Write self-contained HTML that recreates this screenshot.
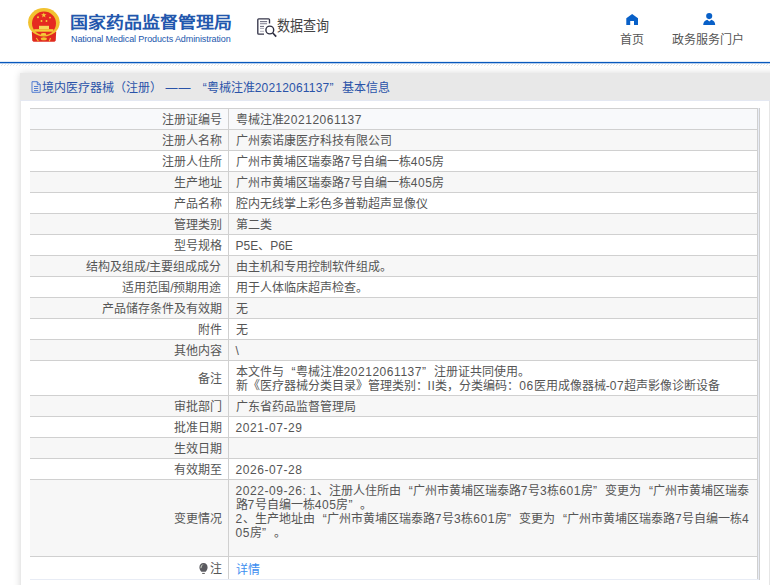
<!DOCTYPE html>
<html lang="zh-CN">
<head>
<meta charset="utf-8">
<style>
*{box-sizing:border-box;}
html,body{margin:0;padding:0;background:#fff;width:770px;height:585px;overflow:hidden;}
body{font-family:"Liberation Sans",sans-serif;color:#555;position:relative;}
.abs{position:absolute;}
#emblem{left:27px;top:7px;width:35px;height:37px;}
#cn{left:70px;top:12px;transform:scaleY(0.88);transform-origin:0 0;font-size:18px;font-weight:bold;color:#2257ad;letter-spacing:0px;white-space:nowrap;line-height:24px;}
#en{left:71px;top:34px;letter-spacing:-0.1px;font-size:9px;color:#2257ad;white-space:nowrap;line-height:10px;}
#sqt{left:277px;top:16px;transform:scaleX(0.87);transform-origin:0 0;font-size:15px;color:#444;white-space:nowrap;line-height:20px;}
.nav{top:32px;font-size:12px;color:#555;line-height:16px;white-space:nowrap;}
#bl{left:0;top:61px;width:770px;height:3px;background:linear-gradient(rgba(7,88,189,0.12) 0,rgba(7,88,189,0.12) 1px,#0758bd 1px,#0758bd 2px,rgba(7,88,189,0.3) 2px);}
#hatch{left:0;top:64px;width:770px;height:2px;}
#panel{left:20px;top:73px;width:760px;height:520px;background:#fff;box-shadow:0 0 7px rgba(0,0,0,0.15);}
#ph{left:0;top:0;width:100%;height:28px;background:#e8e8e8;border-bottom:1px solid #e4e8f2;}
#pb{left:0;top:28px;width:1px;height:600px;background:#e9e9e9;}
#pbr{left:749px;top:28px;width:11px;height:600px;background:#fff;border-left:1px solid #e6e6e6;}
#title{left:11px;top:7px;font-size:12px;color:#2a53a8;white-space:nowrap;line-height:16px;}
#tw{left:30px;top:108px;width:730px;height:472px;background:#e8ecf5;border-right:1px solid #cfcfcf;}
table{position:absolute;left:30px;top:108px;width:728px;border-collapse:collapse;font-size:12px;color:#555;}
td{border-top:1px solid #d0d0d0;padding:2px 0 0 0;line-height:14px;}
td.l{width:198px;text-align:right;padding-right:6px;border-right:1px solid #d0d0d0;}
td.r{padding-left:7px;border-right:1px solid #d0d0d0;}
.q1{display:inline-block;width:12px;text-align:right;}
.q2{display:inline-block;width:12px;text-align:left;}
.pin{display:inline-block;width:11px;vertical-align:-1px;}
.pin svg{display:block;}
.lnk{color:#3d8ef0;position:relative;top:1.5px;}
td.r{white-space:nowrap;}
.n{letter-spacing:0.55px;}
</style>
</head>
<body>
<svg id="emblem" class="abs" viewBox="26 6 36 38" style="left:26px;top:6px;width:36px;height:38px">
  <path d="M31.8 31.5 L32.3 40.8 L33.5 41.7 L54.5 41.7 L55.7 40.8 L56.2 31.5 Z" fill="#e02a1f"/>
  <ellipse cx="43.9" cy="22.2" rx="15.8" ry="14.2" fill="#f2c230"/>
  <ellipse cx="44" cy="23.3" rx="12" ry="11.9" fill="#e52a20"/>
  <polygon points="43.8,12.4 44.5,14.3 46.5,14.3 44.9,15.5 45.5,17.4 43.8,16.2 42.1,17.4 42.7,15.5 41.1,14.3 43.1,14.3" fill="#f4d03c"/>
  <circle cx="38" cy="17.3" r="0.95" fill="#f4d03c"/>
  <circle cx="50" cy="17.6" r="0.95" fill="#f4d03c"/>
  <circle cx="41.5" cy="21" r="0.95" fill="#f4d03c"/>
  <circle cx="46.5" cy="21" r="0.95" fill="#f4d03c"/>
  <rect x="39" y="25.8" width="10" height="3.4" fill="#f6d85a"/>
  <rect x="34.2" y="29.2" width="19.2" height="2.5" fill="#f4cf3a"/>
  <ellipse cx="43.6" cy="34.2" rx="2.8" ry="1.3" fill="#f4cf3a"/>
  <ellipse cx="43.8" cy="38.8" rx="3" ry="1.5" fill="#f2c230"/>
  <path d="M36.3 38 L38.4 41.3 M50.5 38 L49.3 41.3" stroke="#f2c230" stroke-width="1.1"/>
</svg>
<div id="cn" class="abs">国家药品监督管理局</div>
<div id="en" class="abs">National Medical Products Administration</div>
<svg id="sq" class="abs" viewBox="254 14 26 26" style="left:254px;top:14px;width:26px;height:26px">
  <path d="M264 34.1 L258.7 34.1 Q257.8 34.1 257.8 33.2 L257.8 19.7 Q257.8 18.8 258.7 18.8 L268.6 18.8 Q269.5 18.8 269.5 19.7 L269.5 23.5" fill="none" stroke="#36364a" stroke-width="1.35"/>
  <line x1="260" y1="21.6" x2="267.1" y2="21.6" stroke="#55556a" stroke-width="0.9"/>
  <line x1="260" y1="23.6" x2="267.1" y2="23.6" stroke="#9a9aa8" stroke-width="1.4"/>
  <line x1="260" y1="26.4" x2="264" y2="26.4" stroke="#55556a" stroke-width="0.9"/>
  <line x1="260" y1="28.4" x2="264" y2="28.4" stroke="#9a9aa8" stroke-width="0.9"/>
  <line x1="260" y1="31.3" x2="264" y2="31.3" stroke="#aaaab6" stroke-width="0.9"/>
  <circle cx="269.8" cy="30" r="3.9" fill="#fff" stroke="#2e2e40" stroke-width="1.4"/>
  <line x1="272.8" y1="33" x2="276.2" y2="36.6" stroke="#2e2e40" stroke-width="1.7"/>
</svg>
<div id="sqt" class="abs">数据查询</div>
<svg class="abs" style="left:622px;top:10px;width:20px;height:18px" viewBox="622 10 20 18"><path d="M632.15 14 L638 18.2 L638 24.9 L634 24.9 L634 20.9 L630.2 20.9 L630.2 24.9 L626.3 24.9 L626.3 18.2 Z" fill="#0860c8"/></svg>
<div class="abs nav" style="left:620px;">首页</div>
<svg class="abs" style="left:700px;top:10px;width:20px;height:18px" viewBox="700 10 20 18"><circle cx="709.2" cy="16.1" r="3.05" fill="#0860c8"/><path d="M703.2 25.1 Q703.4 20.6 707.3 19.8 L709.3 21.6 L711.3 19.8 Q715 20.6 715.2 25.1 Z" fill="#0860c8"/></svg>
<div class="abs nav" style="left:672px;">政务服务门户</div>
<div id="bl" class="abs"></div>
<svg id="hatch" class="abs" width="770" height="2">
  <defs><pattern id="hp" width="3" height="3" patternUnits="userSpaceOnUse"><path d="M0 3 L3 0" stroke="#e2e2e2" stroke-width="0.9"/></pattern></defs>
  <rect width="770" height="2" fill="url(#hp)"/>
</svg>
<div id="panel" class="abs">
  <div id="ph" class="abs"></div><div id="pb" class="abs"></div><div id="pbr" class="abs"></div>
  <div id="title" class="abs"><svg width="10" height="12" viewBox="0 0 10 12" style="vertical-align:-1px;margin-right:1px"><path d="M1 0.7 L6.3 0.7 L9.2 3.6 L9.2 11.3 L1 11.3 Z M6.3 0.7 L6.3 3.6 L9.2 3.6 M3 5.5 L7.2 5.5 M3 7.5 L7.2 7.5 M3 9.5 L7.2 9.5" fill="none" stroke="#3a6ccc" stroke-width="0.85"/></svg>境内医疗器械（注册）<span style="margin-left:3.5px;letter-spacing:1.1px">——</span><span class="q1" style="margin-left:2px;width:13px">“</span>粤械注准<span style="letter-spacing:0.2px">20212061137</span><span class="q2" style="width:13px">”</span>基本信息</div>
</div>
<div id="tw" class="abs"></div>
<table>
<tr style="height:21px;background:#f8f9fb"><td class="l">注册证编号</td><td class="r">粤械注准<span class="n">20212061137</span></td></tr>
<tr style="height:21px;background:#f7f7f7"><td class="l">注册人名称</td><td class="r">广州索诺康医疗科技有限公司</td></tr>
<tr style="height:21px;background:#fff"><td class="l">注册人住所</td><td class="r">广州市黄埔区瑞泰路<span class="n">7</span>号自编一栋<span class="n">405</span>房</td></tr>
<tr style="height:21px;background:#f7f7f7"><td class="l">生产地址</td><td class="r">广州市黄埔区瑞泰路<span class="n">7</span>号自编一栋<span class="n">405</span>房</td></tr>
<tr style="height:21px;background:#fff"><td class="l">产品名称</td><td class="r">腔内无线掌上彩色多普勒超声显像仪</td></tr>
<tr style="height:21px;background:#f7f7f7"><td class="l">管理类别</td><td class="r">第二类</td></tr>
<tr style="height:21px;background:#fff"><td class="l">型号规格</td><td class="r">P5E、P6E</td></tr>
<tr style="height:21px;background:#f7f7f7"><td class="l">结构及组成/主要组成成分</td><td class="r">由主机和专用控制软件组成。</td></tr>
<tr style="height:21px;background:#fff"><td class="l">适用范围/预期用途</td><td class="r">用于人体临床超声检查。</td></tr>
<tr style="height:21px;background:#f7f7f7"><td class="l">产品储存条件及有效期</td><td class="r">无</td></tr>
<tr style="height:21px;background:#fff"><td class="l">附件</td><td class="r">无</td></tr>
<tr style="height:21px;background:#f7f7f7"><td class="l">其他内容</td><td class="r">\</td></tr>
<tr style="height:35px;background:#fff"><td class="l">备注</td><td class="r">本文件与<span class="q1">“</span>粤械注准<span class="n">20212061137</span><span class="q2">”</span>注册证共同使用。<br>新《医疗器械分类目录》管理类别：<span class="n">II</span>类，分类编码：<span class="n">06</span>医用成像器械-<span class="n">07</span>超声影像诊断设备</td></tr>
<tr style="height:21px;background:#f7f7f7"><td class="l">审批部门</td><td class="r">广东省药品监督管理局</td></tr>
<tr style="height:21px;background:#fff"><td class="l">批准日期</td><td class="r"><span class="n">2021-07-29</span></td></tr>
<tr style="height:21px;background:#f7f7f7"><td class="l">生效日期</td><td class="r"></td></tr>
<tr style="height:21px;background:#fff"><td class="l">有效期至</td><td class="r"><span class="n">2026-07-28</span></td></tr>
<tr style="height:77px;background:#f7f7f7"><td class="l">变更情况</td><td class="r"><span class="n">2022-09-26:</span> <span class="n">1</span>、注册人住所由<span class="q1">“</span>广州市黄埔区瑞泰路<span class="n">7</span>号<span class="n">3</span>栋<span class="n">601</span>房<span class="q2">”</span>变更为<span class="q1">“</span>广州市黄埔区瑞泰<br>路<span class="n">7</span>号自编一栋<span class="n">405</span>房<span class="q2">”</span>。<br><span class="n">2</span>、生产地址由<span class="q1">“</span>广州市黄埔区瑞泰路<span class="n">7</span>号<span class="n">3</span>栋<span class="n">601</span>房<span class="q2">”</span>变更为<span class="q1">“</span>广州市黄埔区瑞泰路<span class="n">7</span>号自编一栋<span class="n">4</span><br><span class="n">05</span>房<span class="q2">”</span>。<br>&nbsp;</td></tr>
<tr style="height:22px;background:#fff"><td class="l"><span class='pin'><svg width='9' height='11' viewBox='0 0 9 11'><path d='M4.5 0.1 C7 0.1 8.6 2 8.6 4.4 C8.6 6.4 7.4 7.5 6.6 8.7 L2.4 8.7 C1.6 7.5 0.4 6.4 0.4 4.4 C0.4 2 2 0.1 4.5 0.1 Z' fill='#5a5a60'/><rect x='3.2' y='9.9' width='2.6' height='1.1' fill='#666'/><path d='M1.9 5.2 Q1.9 2.6 3.8 1.5' stroke='#d0d8c8' stroke-width='1' fill='none'/></svg></span>注</td><td class="r"><span class='lnk'>详情</span></td></tr>
</table>
</body>
</html>
